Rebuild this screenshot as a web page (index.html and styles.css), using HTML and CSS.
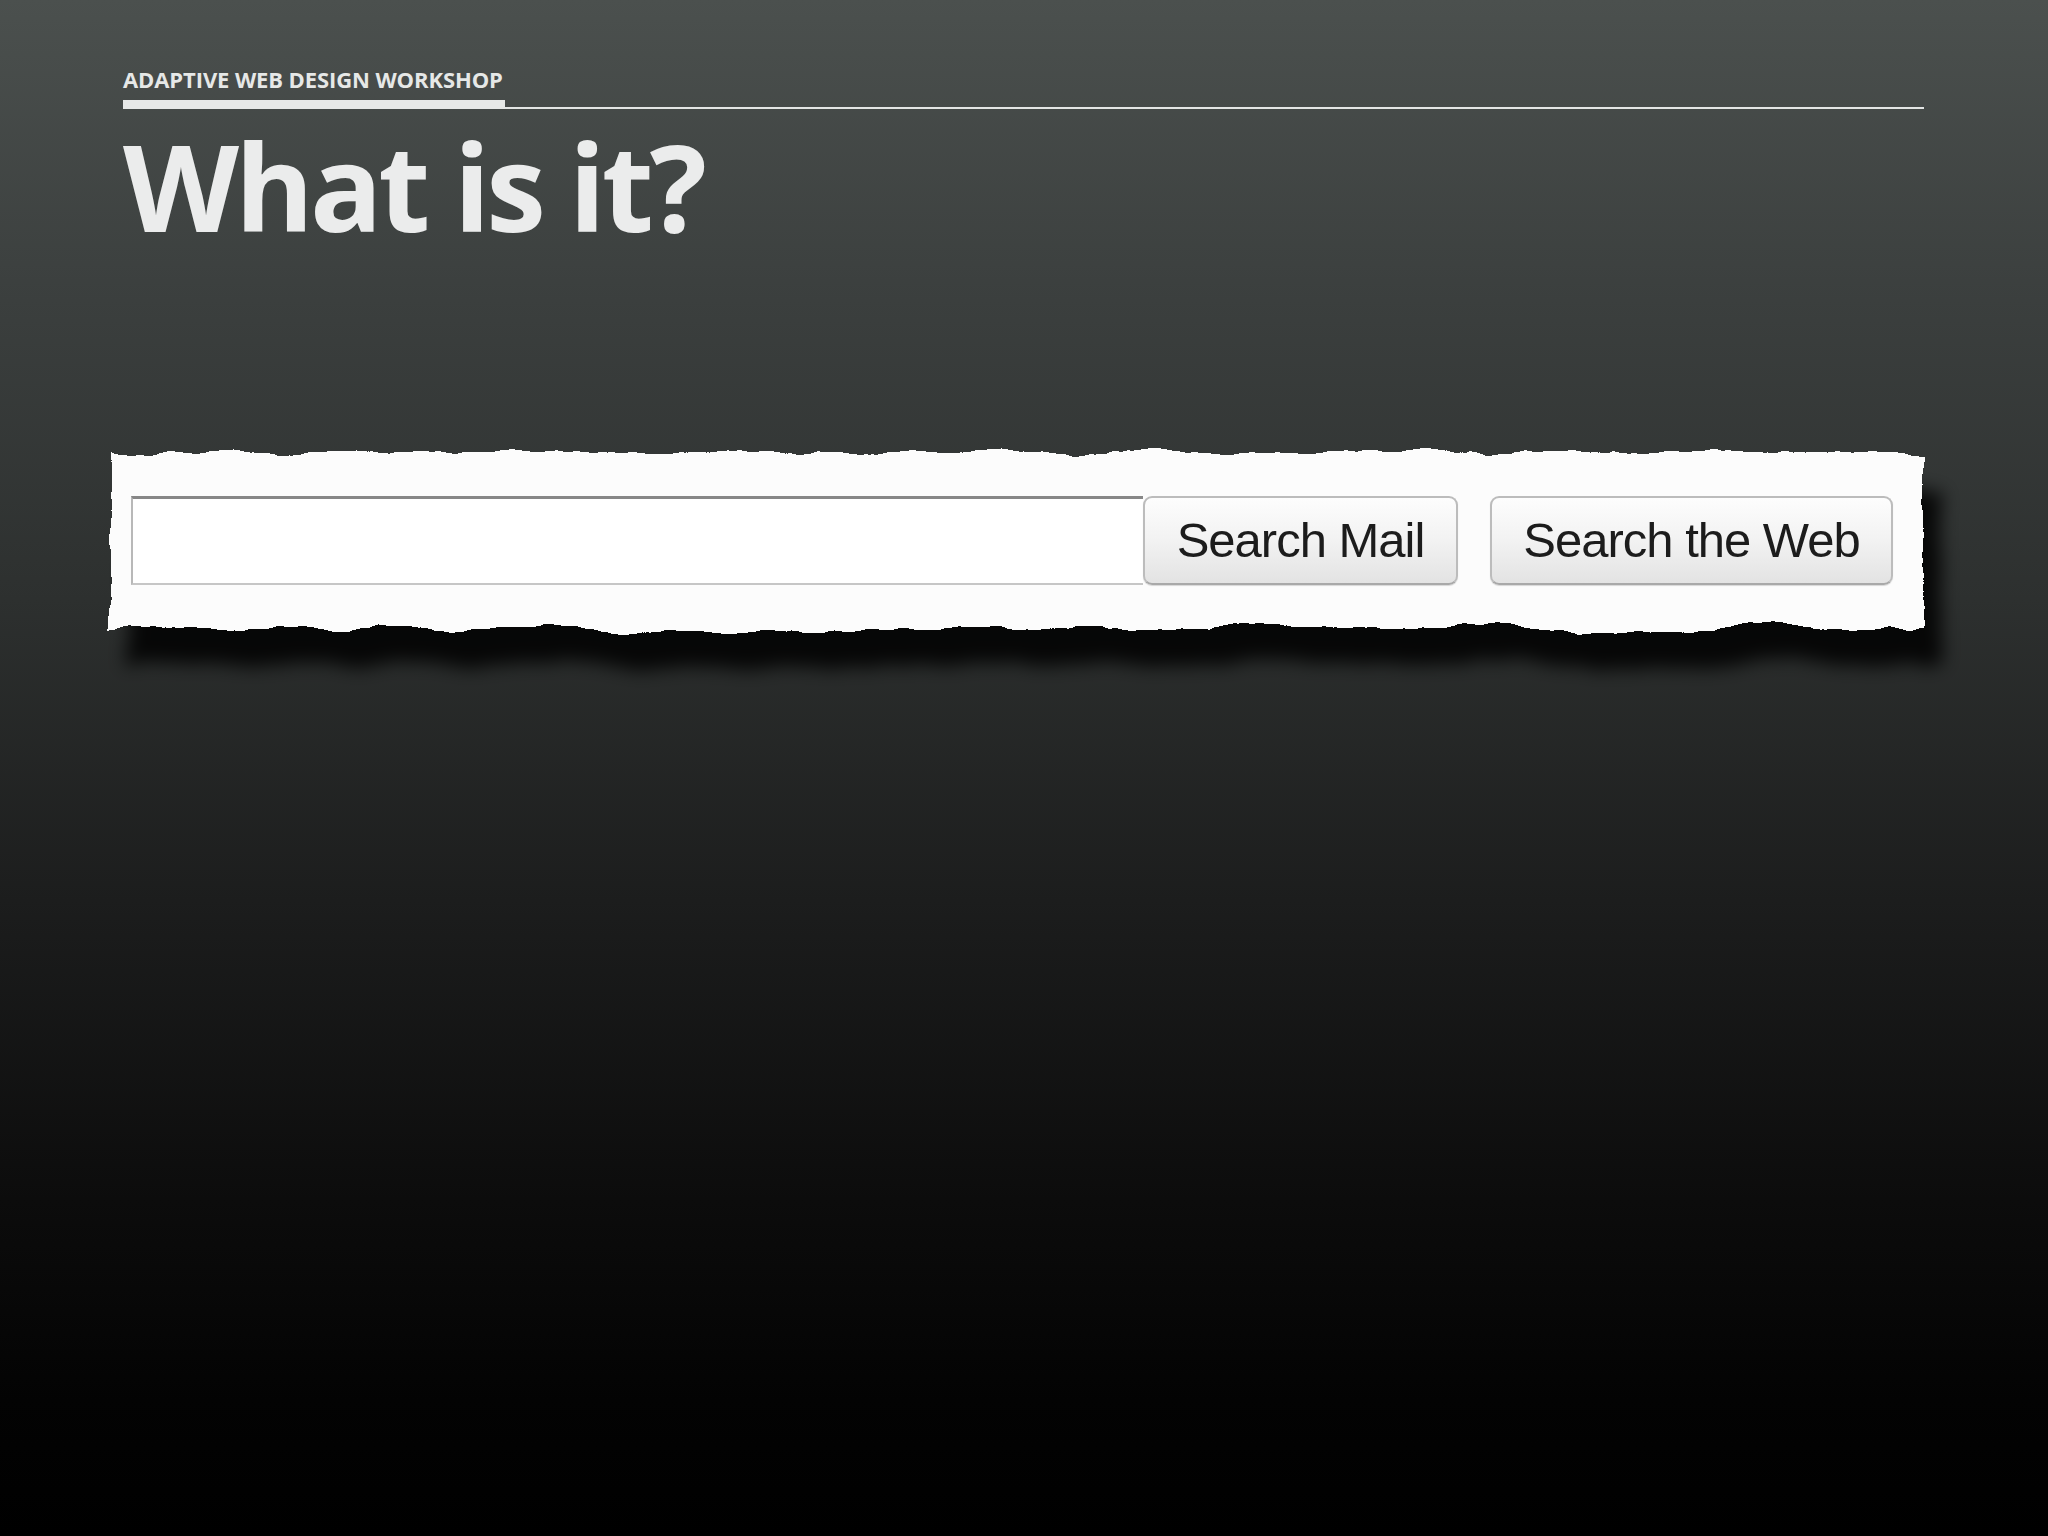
FILE: index.html
```html
<!DOCTYPE html>
<html lang="en">
<head>
    <meta charset="UTF-8">
    <title>What is it?</title>
    <link rel="stylesheet" href="styles.css">
</head>
<body>

    <!-- filtro do papel rasgado -->
    <svg class="defs" width="0" height="0" aria-hidden="true">
        <filter id="torn" x="-5%" y="-30%" width="110%" height="160%">
            <feTurbulence type="fractalNoise" baseFrequency="0.014" numOctaves="5" seed="3" result="noise"/>
            <feDisplacementMap in="SourceGraphic" in2="noise" scale="20" xChannelSelector="R" yChannelSelector="G"/>
        </filter>
    </svg>

    <div class="slide">
        <div class="topbar">
            <span class="kicker">ADAPTIVE WEB DESIGN WORKSHOP</span>
        </div>

        <h1>What is it?</h1>

        <div class="strip">
            <div class="paper"></div>
            <form class="search-row" onsubmit="return false">
                <input type="text" class="query">
                <button class="btn btn-mail">Search Mail</button>
                <button class="btn btn-web">Search the Web</button>
            </form>
        </div>
    </div>

</body>
</html>
```

FILE: styles.css
```css
html, body {
    margin: 0;
    height: 100%;
}

body {
    background: linear-gradient(to bottom, #4b504e 0px, #3b3f3e 300px, #2d302f 600px, #1c1d1d 900px, #0c0c0c 1200px, #030303 1400px, #000 1536px);
    font-family: 'Open Sans', sans-serif;
    color: #ebecec;
    min-height: 1536px;
}

.defs {
    position: absolute;
}

.slide {
    padding: 68px 124px 0 123px;
}

/* faixa do topo */
.topbar {
    display: flex;
    border-bottom: 2px solid #e3e5e4;
}

.kicker {
    font-size: 22px;
    line-height: 22px;
    font-weight: 700;
    letter-spacing: -0.1px;
    color: #e6e8e7;
    padding-bottom: 10px;
    padding-right: 2px;
    border-bottom: 9px solid #e6e8e7;
    margin-bottom: -2px;
}

h1 {
    font-size: 120px;
    line-height: 1;
    font-weight: 700;
    letter-spacing: -4px;
    margin: 17px 0 0;
    color: #ebecec;
}

/* papel rasgado com a busca */
.strip {
    position: relative;
    width: 1810px;
    height: 177px;
    margin: 206px 0 0 -12px;
    box-sizing: border-box;
    padding: 44px 0 0 20px;
}

.paper {
    position: absolute;
    inset: 0;
    background: #fcfcfc;
    filter: url(#torn) drop-shadow(18px 36px 9px rgba(0, 0, 0, 0.85));
}

.search-row {
    position: relative;
    display: flex;
    align-items: stretch;
    height: 89px;
    margin: 0;
}

.query {
    width: 1012px;
    box-sizing: border-box;
    margin: 0;
    background: #fff;
    border: none;
    border-top: 3px solid #878787;
    border-left: 2px solid #b8b8b8;
    border-bottom: 2px solid #c6c6c6;
    outline: none;
}

.btn {
    box-sizing: border-box;
    margin: 0;
    padding: 0 0 2px;
    font-family: 'Liberation Sans', Arial, sans-serif;
    font-size: 49px;
    letter-spacing: -1px;
    color: #1c1c1c;
    background: linear-gradient(to bottom, #fdfdfd 0%, #f2f2f2 50%, #e3e3e3 100%);
    border: 2px solid #bcbcbc;
    border-bottom-color: #a9a9a9;
    border-radius: 9px;
    box-shadow: 0 1px 1px rgba(0, 0, 0, 0.15);
}

.btn-mail {
    width: 315px;
}

.btn-web {
    width: 403px;
    margin-left: 32px;
}
```
